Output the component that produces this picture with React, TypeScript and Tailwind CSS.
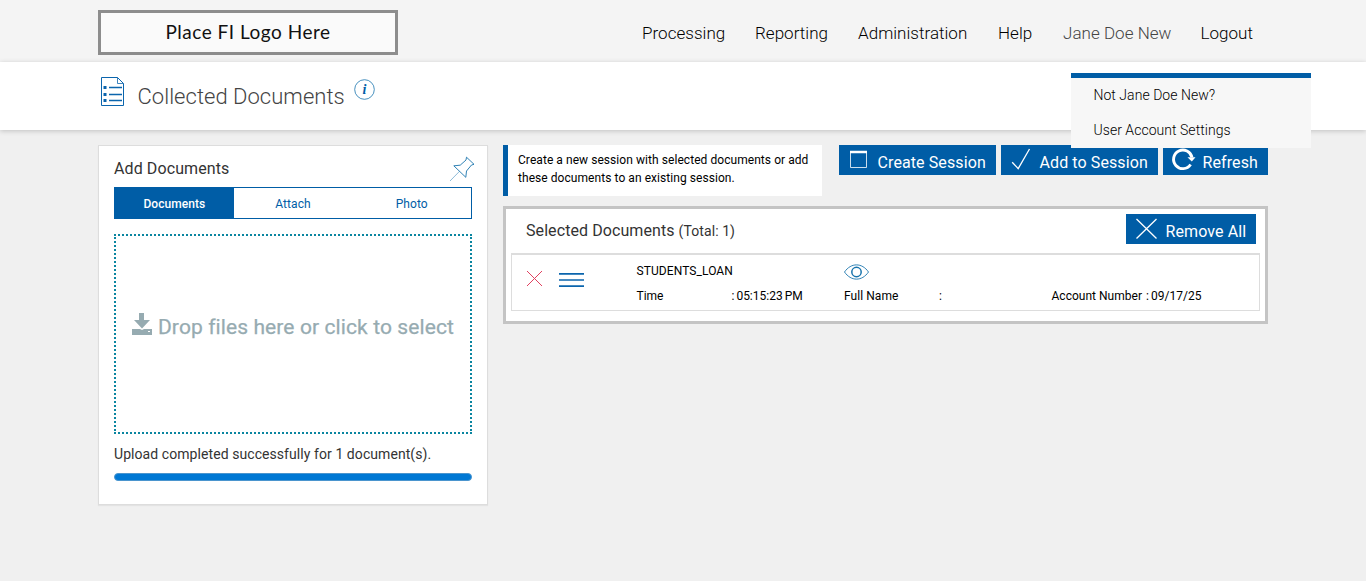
import clsx from "clsx";

const navItems = [
  { label: "Processing", width: "w-[113px]" },
  { label: "Reporting", width: "w-[103px]" },
  { label: "Administration", width: "w-[140px]" },
  { label: "Help", width: "w-[65px]" },
  { label: "Jane Doe New", width: "w-[137.5px]", active: true },
  { label: "Logout", width: "w-[67.5px]" }
];

const tabs = ["Documents", "Attach", "Photo"];

function DocumentIcon() {
  return (
    <svg className="mt-[14px] h-[31px] w-[25px] shrink-0" viewBox="0 0 25 31" fill="none" stroke="#0b65ad">
      <path d="M1.5 1.5H17.5L23.5 7.5V29.5H1.5Z" />
      <path d="M17.5 1.5V7.5H23.5" strokeWidth="0.8" />
      <path d="M9 11.5H22M9 18.5H22M9 24.5H22" strokeWidth="1.4" />
      <path d="M3.5 11.5H6.5M3.5 18.5H6.5M3.5 24.5H6.5" strokeWidth="2.8" />
    </svg>
  );
}

function PinIcon() {
  return (
    <svg className="h-[26px] w-[26px]" viewBox="0 0 26 26" fill="none" stroke="#1874ad" strokeWidth="0.9">
      <path d="M17.5 1.2L25 8.3L22.5 9L17.5 15L16.8 21.3L4.8 9.8L11.2 9.2L17 4Z" />
      <path d="M10.5 15.3L1 25" strokeWidth="0.7" opacity="0.7" />
    </svg>
  );
}

function SessionButton({ label, className, children }: { label: string; className: string; children: React.ReactNode }) {
  return (
    <button type="button" className={clsx("flex h-[30px] shrink-0 overflow-hidden bg-[#005da6] text-[16px] leading-[35px] tracking-[0.1px] whitespace-nowrap text-white", className)}>
      <span className="w-[38.5px] shrink-0">{children}</span>
      <span>{label}</span>
    </button>
  );
}

export default function App() {
  return (
    <div className="min-h-[581px] bg-[#f0f0f0] font-['Roboto',sans-serif] text-[#333]">
      <header className="h-[62px] bg-[#f4f4f4]">
        <div className="mx-auto flex w-[1170px] justify-between pt-[10px]">
          <div className="h-[45px] w-[300px] border-[3px] border-[#8d8d8d] bg-[#fafafa] text-center font-['Lato',sans-serif] text-[19px] leading-[38px] tracking-[0.5px] text-[#111]">
            Place FI Logo Here
          </div>
          <nav className="flex text-[17px] leading-[46px] font-light tracking-[0.03px] text-black">
            {navItems.map((item) => (
              <a key={item.label} className={clsx("shrink-0 whitespace-nowrap", item.width, item.active && "text-[#444]")}>
                {item.label}
              </a>
            ))}
          </nav>
        </div>
      </header>

      <section className="relative h-[68px] bg-white shadow-[0_1px_5px_rgba(0,0,0,0.2)]">
        <div className="mx-auto flex w-[1170px] pl-[2px]">
          <DocumentIcon />
          <h1 className="ml-[12.5px] w-[216.5px] text-[22px] leading-[70px] font-light tracking-[0.03px] whitespace-nowrap text-[#444]">Collected Documents</h1>
          <svg className="mt-[17px] h-[21px] w-[21px]" viewBox="0 0 21 21">
            <circle cx="10.5" cy="10.5" r="9.8" fill="none" stroke="#1874ad" strokeWidth="0.8" />
            <text x="10.5" y="15" textAnchor="middle" fontSize="14" fontFamily="Liberation Serif, serif" fontStyle="italic" fontWeight="bold" fill="#005da6">i</text>
          </svg>
        </div>
        <div className="absolute top-[11px] left-[1071px] z-10 h-[75px] w-[240px] border-t-[5px] border-[#005da6] bg-[#f7f7f7] pl-[22.5px] text-[14px] leading-[35px] font-light tracking-[0.04px] text-black">
          <p>Not Jane Doe New?</p>
          <p>User Account Settings</p>
        </div>
      </section>

      <main className="mx-auto flex w-[1170px] items-start gap-[15px] pt-[15px]">
        <section className="h-[360px] w-[390px] shrink-0 border border-[#ddd] bg-white px-[15px] shadow-[0_1px_1px_rgba(0,0,0,0.05)]">
          <div className="flex h-[41px] justify-between">
            <h2 className="text-[16px] leading-[46px] tracking-[0.1px]">Add Documents</h2>
            <div className="mt-[10px] -mr-[3px]">
              <PinIcon />
            </div>
          </div>
          <div className="flex h-[32px] border border-[#005da6] text-center text-[12px] leading-[32px] tracking-[0.06px] text-[#005da6]">
            {tabs.map((tab, i) => (
              <button key={tab} type="button" className={clsx("h-[30px] flex-1", i === 0 && "bg-[#005da6] font-medium text-white")}>
                {tab}
              </button>
            ))}
          </div>
          <div className="mt-[15px] flex h-[200px] justify-center border-2 border-dotted border-[#0a85a0] text-[21px] leading-[182px] tracking-[0.1px] text-[#96abb1] [-webkit-text-stroke:0.25px_#96abb1]">
            <svg className="mt-[77px] mr-[6px] h-[22px] w-[20px] shrink-0" viewBox="0 0 20 22" fill="currentColor">
              <path d="M7 0H12V7H18L10 15.5L2 7H7Z" />
              <path fillRule="evenodd" d="M0 16H8L10 17L12 16H20V22H0ZM16 18V19H18V18Z" />
            </svg>
            <span className="whitespace-nowrap">Drop files here or click to select</span>
          </div>
          <p className="mt-[10px] text-[14px] leading-[20px] tracking-[0.07px]">Upload completed successfully for 1 document(s).</p>
          <div className="mt-[9px] h-[8px] rounded-full border border-[#4b95ce] bg-[#0078d4]" />
        </section>

        <section className="w-[765px] shrink-0">
          <div className="flex">
            <p className="h-[51px] w-[319px] border-l-[5px] border-[#005da6] bg-white pt-[6px] pl-[10px] text-[12px] leading-[18px] tracking-[0.06px] text-black">
              Create a new session with selected documents or add these documents to an existing session.
            </p>
            <div className="ml-[17px] flex gap-[5px]">
              <SessionButton label="Create Session" className="w-[157px]">
                <svg className="h-[30px] w-[38px]" viewBox="0 0 38 30" fill="none" stroke="white">
                  <path d="M11.5 6V22.5H27.5V6" strokeWidth="0.8" />
                  <path d="M11 7H28" strokeWidth="2.5" />
                </svg>
              </SessionButton>
              <SessionButton label="Add to Session" className="w-[157px]">
                <svg className="h-[30px] w-[38px]" viewBox="0 0 38 30" fill="none" stroke="white">
                  <path d="M11.2 17.2L17.2 23.6L28.5 4" strokeWidth="1.3" />
                </svg>
              </SessionButton>
              <SessionButton label="Refresh" className="w-[105px] pl-px">
                <svg className="h-[30px] w-[38px]" viewBox="0 0 38 30" fill="none" stroke="white">
                  <path d="M26.6 19.5A9.3 9.3 0 1 1 28 12.5" strokeWidth="2.9" />
                  <path d="M23.5 12.2H31.5L27.8 16.5Z" fill="white" stroke="none" />
                </svg>
              </SessionButton>
            </div>
          </div>

          <div className="mt-[10px] h-[118px] border-[3px] border-[#c4c4c4] bg-white px-[5px] pt-[5px]">
            <div className="flex h-[39px] justify-between pr-[4px] pl-[15px]">
              <h2 className="text-[16px] leading-[33px] tracking-[0.08px]">
                Selected Documents <span className="text-[14px]">(Total: 1)</span>
              </h2>
              <SessionButton label="Remove All" className="w-[130px] pl-px">
                <svg className="h-[30px] w-[38px]" viewBox="0 0 38 30" fill="none" stroke="white" strokeWidth="1.3">
                  <path d="M9.5 5L29.5 24.5M29.5 5L9.5 24.5" />
                </svg>
              </SessionButton>
            </div>
            <div className="flex h-[58px] border border-t-2 border-[#ddd] text-[12px] text-black">
              <svg className="mt-[15px] ml-[14px] h-[17px] w-[17px] shrink-0" viewBox="0 0 17 17" stroke="#e0405f" strokeWidth="1">
                <path d="M1 1L16 16M16 1L1 16" />
              </svg>
              <svg className="mt-[16px] ml-[16px] h-[17px] w-[26px] shrink-0" viewBox="0 0 26 17" stroke="#0b65ad" strokeWidth="1.7">
                <path d="M0 2.9H25M0 9H25M0 15.1H25" />
              </svg>
              <div className="ml-[51.5px] w-[207.5px] shrink-0">
                <p className="mt-[6px] h-[25px] leading-[20px] tracking-[0.08px]">STUDENTS_LOAN</p>
                <p className="flex leading-[20px]">
                  <span className="w-[95px]">Time</span>
                  <span className="[word-spacing:-1px]">: 05:15:23 PM</span>
                </p>
              </div>
              <div className="w-[207.5px] shrink-0">
                <svg className="mt-[9px] mb-[6px] h-[16px] w-[26px]" viewBox="0 0 26 16" fill="none" stroke="#1874ad">
                  <path d="M0.5 8C7 -1.5 18 -1.5 24.5 8C18 17.5 7 17.5 0.5 8Z" strokeWidth="0.9" />
                  <circle cx="12.5" cy="8" r="4.7" strokeWidth="1.5" />
                </svg>
                <p className="flex leading-[20px]">
                  <span className="w-[95px] tracking-[0.06px]">Full Name</span>
                  <span>:</span>
                </p>
              </div>
              <p className="mt-[31px] leading-[20px] tracking-[0.02px] whitespace-nowrap">
                Account Number <span className="pl-px [word-spacing:-1px]">: 09/17/25</span>
              </p>
            </div>
          </div>
        </section>
      </main>
    </div>
  );
}
